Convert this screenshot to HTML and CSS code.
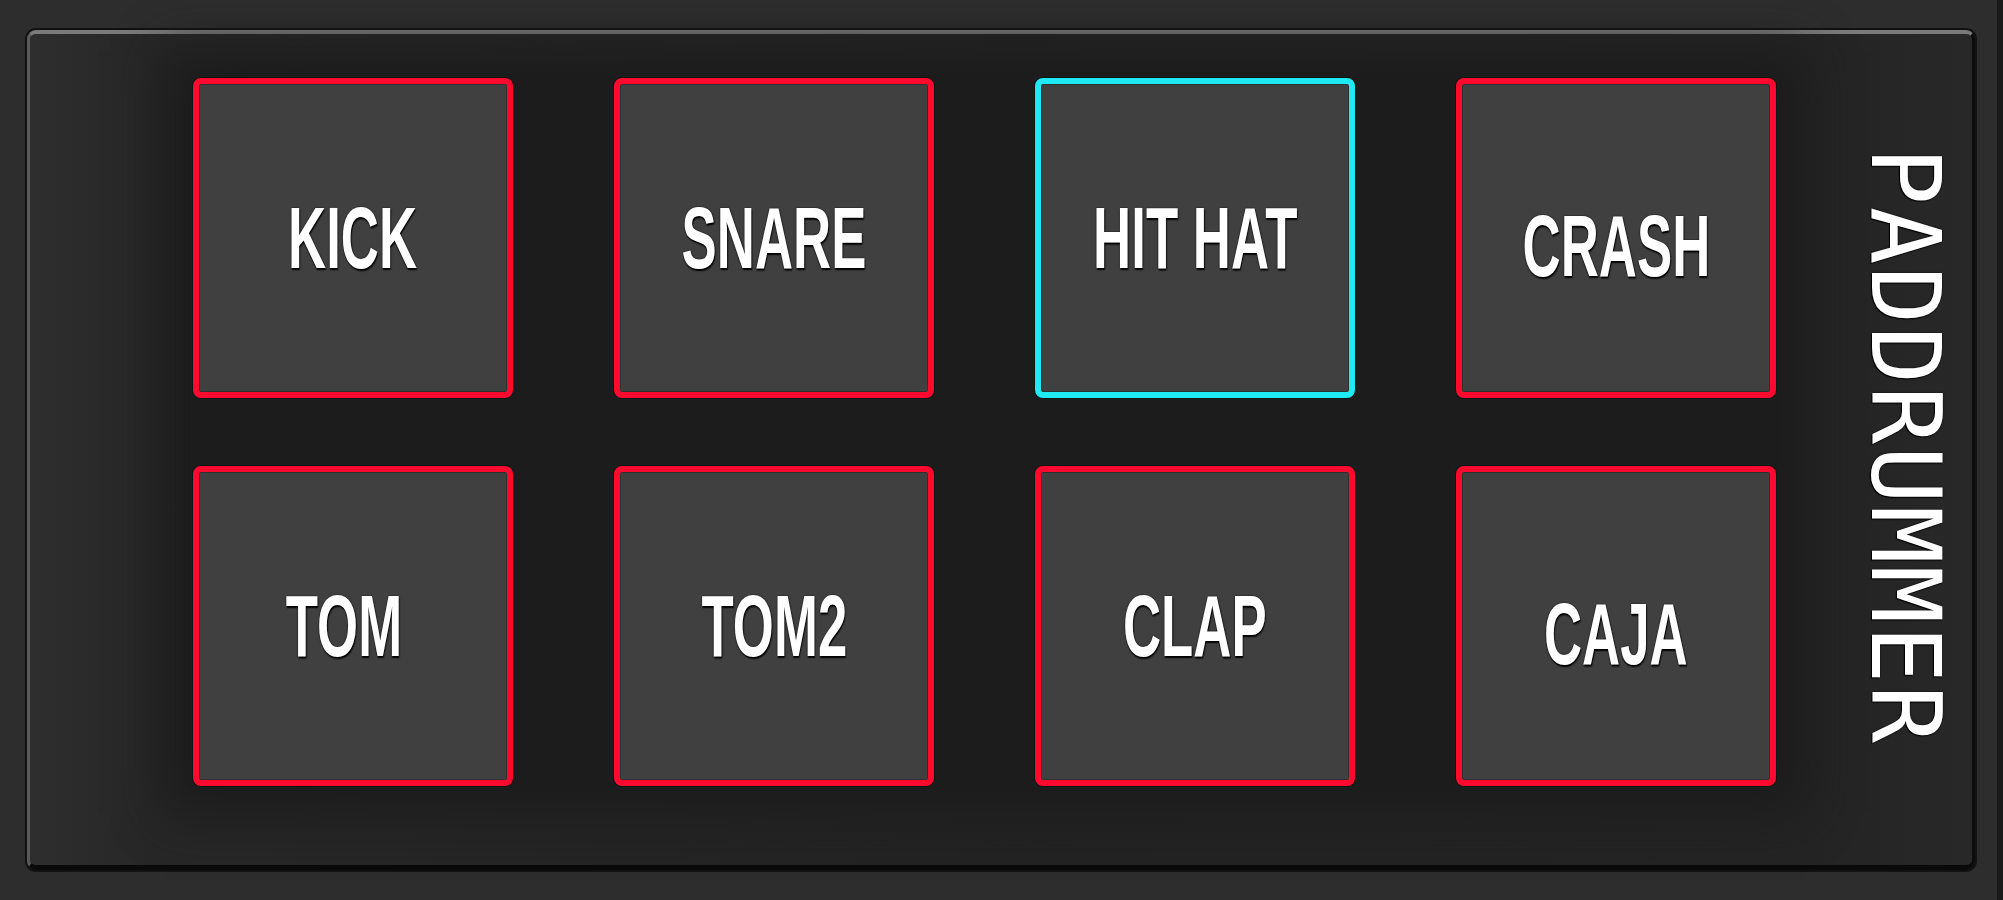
FILE: index.html
```html
<!DOCTYPE html>
<html lang="en">
<head>
    <meta charset="UTF-8">
    <meta name="viewport" content="width=device-width, initial-scale=1.0">
    <title>PadDrummer</title>
    <link rel="stylesheet" href="styles.css">
</head>
<body>
  <div class="main">
     <div class="drum-panel">
        <div class="pads">
           <button class="pad"><span>KICK</span></button>
           <button class="pad"><span>SNARE</span></button>
           <button class="pad active"><span>HIT HAT</span></button>
           <button class="pad low"><span>CRASH</span></button>
           <button class="pad left"><span>TOM</span></button>
           <button class="pad"><span>TOM2</span></button>
           <button class="pad"><span>CLAP</span></button>
           <button class="pad low"><span>CAJA</span></button>
        </div>
        <p class="brand">PADDRUMMER</p>
     </div>
  </div>
</body>
</html>
```

FILE: styles.css
```css
* {
  margin: 0;
  padding: 0;
  box-sizing: border-box;
  font-family: "Liberation Sans", Arial, sans-serif;
}

body {
  background-color: #2d2d2d;
}

.main {
  width: 2003px;
  height: 900px;
  padding: 30px 0 0 27px;
  border-right: 6px solid #1a1a1a;
}

.drum-panel {
  display: flex;
  align-items: flex-start;
  width: 1948px;
  height: 840px;
  padding: 44px 0 0 163px;
  background: linear-gradient(90deg, #2e2e2e 0%, #272727 6%, #232323 50%, #242424 92%, #282828 100%);
  border-top: 4px solid #7a7a7a;
  border-left: 3px solid #5a5a5a;
  border-right: 3px solid #0c0c0c;
  border-bottom: 5px solid #0a0a0a;
  border-radius: 9px;
  box-shadow: 0 0 0 2px #121212;
}

.pads {
  display: grid;
  grid-template-columns: repeat(4, 320px);
  grid-auto-rows: 320px;
  column-gap: 101px;
  row-gap: 68px;
  background-color: #1c1c1c;
  box-shadow: 0 0 45px 28px #1c1c1c;
}

.pad {
  display: flex;
  align-items: center;
  justify-content: center;
  background-color: #404040;
  border: 6px solid #ff0a2e;
  border-radius: 8px;
  box-shadow: 0 0 0 1px #0d1515, inset 0 0 0 1px #2c3232;
  cursor: pointer;
}

.pad.active {
  border-color: #1fe9f2;
}

.pad.low {
  padding-top: 16px;
}

.pad.left {
  padding-right: 18px;
}

.pad span {
  display: block;
  color: #fff;
  font-size: 88px;
  font-weight: 700;
  line-height: 1;
  white-space: nowrap;
  transform: scaleX(0.6);
  text-shadow: 0 0 2px #000, 1px 2px 2px #000;
}

.brand {
  margin: 69px 0 0 81px;
  writing-mode: vertical-rl;
  font-family: "DejaVu Sans Mono", monospace;
  font-size: 96px;
  line-height: 1;
  letter-spacing: 2px;
  color: #fff;
  text-shadow: 0 0 2px #000, 1px 1px 1px #000;
}
```
